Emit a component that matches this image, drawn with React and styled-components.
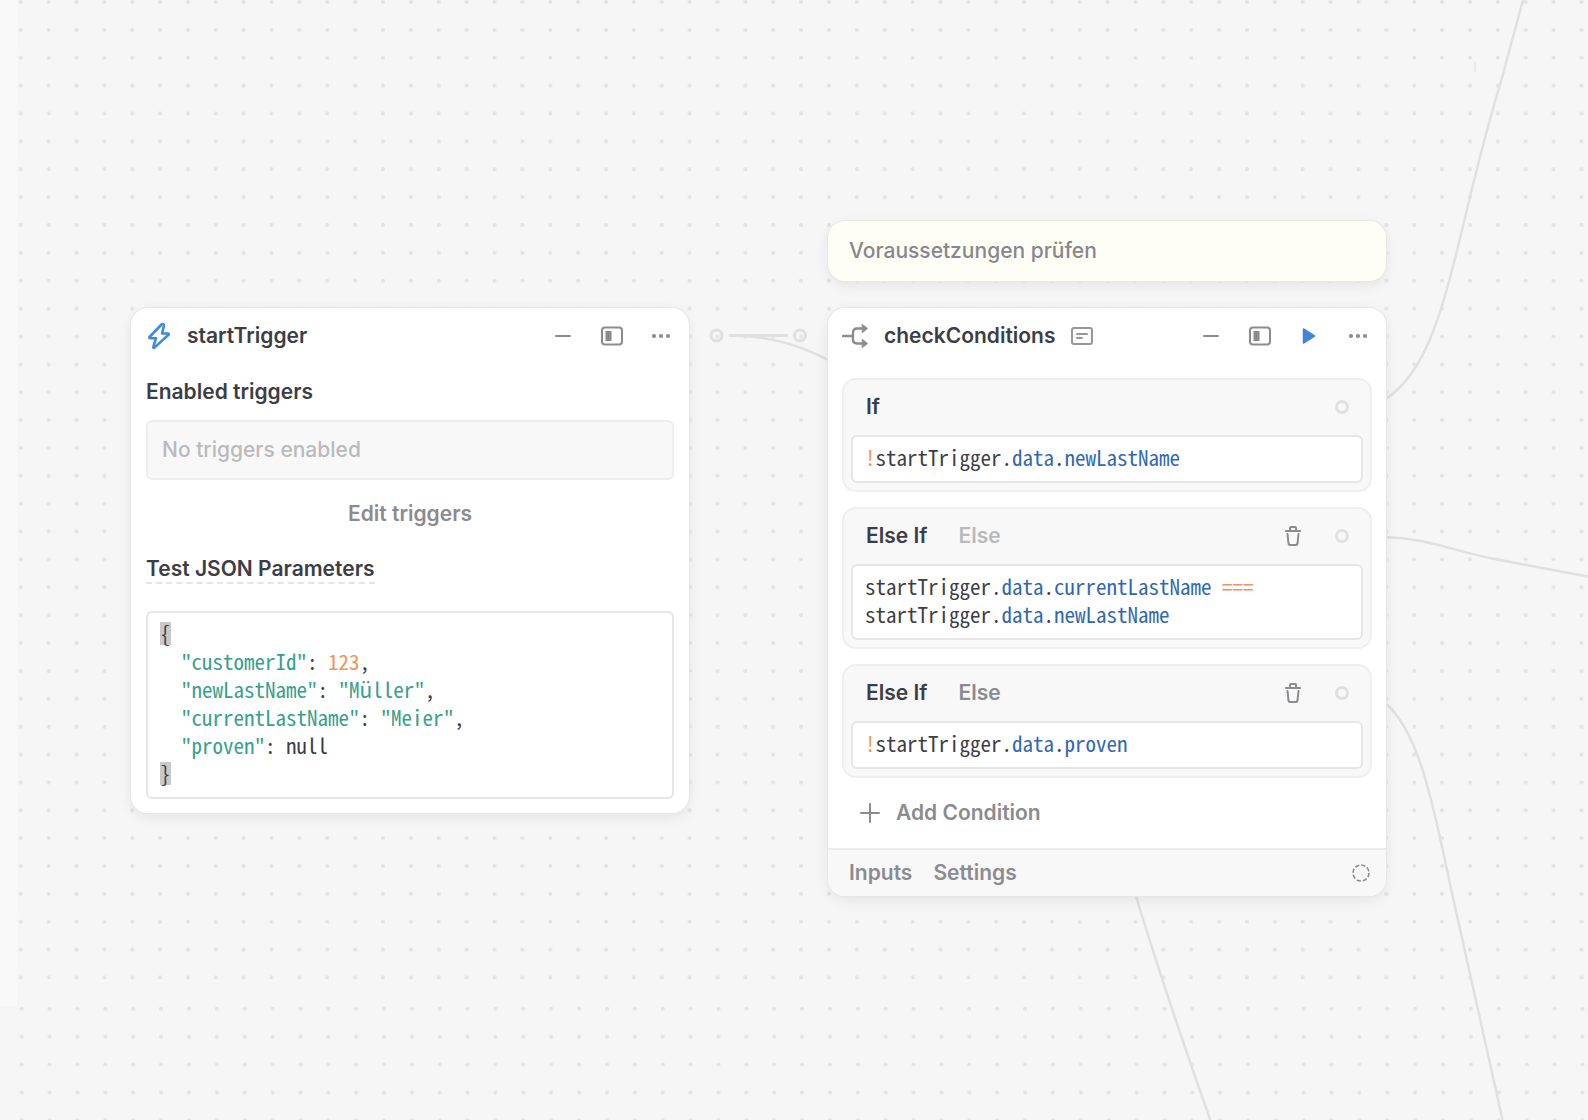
import styled, { createGlobalStyle, css } from "styled-components";

const GlobalStyle = createGlobalStyle`
    * {
        box-sizing: border-box;
    }

    body {
        margin: 0;
        background-color: #f6f6f6;
        color: #3d3d46;
        font-family: Inter, "Liberation Sans", sans-serif;
        font-size: 21px;
        line-height: 28px;
    }
`

const Canvas = styled.main`
    position: relative;
    min-height: 100vh;
    overflow: hidden;
`

const Wires = styled.svg`
    position: absolute;
    inset: 0;
    width: 100%;
    height: 100%;
`

const Node = styled.section`
    position: absolute;
    left: ${props => props.$x}px;
    top: ${props => props.$y}px;
    width: 558px;
`

const surface = css`
    border-radius: 17px;
    box-shadow: 0 0 0 1px #e7e7e7, 0 4px 14px rgba(0, 0, 0, 0.08);
`

const Card = styled.div`
    ${surface}
    background-color: #ffffff;
    overflow: hidden;
`

const Note = styled.p`
    ${surface}
    margin: 0 0 27px;
    padding: 16px 21px;
    background-color: #fffef6;
    color: #87878c;
    font-weight: 500;
`

const Header = styled.header`
    display: flex;
    align-items: center;
    height: 55px;
    padding: 0 14px;
`

const Name = styled.h2`
    margin: 0 15px 0 14px;
    font-size: 21px;
    font-weight: 600;
`

const Tools = styled.div`
    display: flex;
    gap: 21px;
    margin-left: auto;
`

const IconButton = styled.button`
    display: flex;
    padding: 0;
    border: 0;
    background: none;
    color: #8b8b90;
    cursor: pointer;
`

const Body = styled.div`
    display: flex;
    flex-direction: column;
    padding: 15px 15px 14px;
`

const Label = styled.h3`
    margin: 0;
    font-size: 21px;
    font-weight: 600;
`

const HintLabel = styled(Label)`
    align-self: flex-start;
    margin-bottom: 27px;
    border-bottom: 2px dashed #e4e4e4;
    line-height: 26px;
`

const Empty = styled.div`
    margin-top: 14px;
    padding: 14px;
    border: 2px solid #eeeeee;
    border-radius: 6px;
    background-color: #f8f8f8;
    color: #b9babc;
    font-weight: 500;
`

const TextButton = styled.button`
    display: flex;
    align-items: center;
    gap: 12px;
    padding: 0;
    border: 0;
    background: none;
    color: ${props => props.$color || '#8b8b90'};
    font: inherit;
    font-weight: 600;
    cursor: pointer;
`

const EditButton = styled(TextButton)`
    align-self: center;
    margin: 20px 0 28px;
`

const Code = styled.pre`
    margin: 0;
    padding: 6px 12px 10px;
    border: 2px solid #e6e6e6;
    border-radius: 6px;
    background-color: #ffffff;
    color: #3d3d46;
    font-family: "Noto Sans Mono CJK SC", "Liberation Mono", monospace;
    font-size: 21px;
    line-height: 28px;
    white-space: pre-wrap;
`

const tokens = {
    string: '#35a08c',
    number: '#f2935a',
    operator: '#f2935a',
    property: '#3067b5',
}

const Token = styled.span`
    color: ${props => tokens[props.$type]};
`

const Brace = styled.span`
    display: inline-block;
    background-color: #c9c9c9;
    line-height: 23px;
`

const Conditions = styled.div`
    display: flex;
    flex-direction: column;
    gap: 15px;
    padding: 15px 14px 21px;
`

const Condition = styled.div`
    padding: 0 7px 7px;
    border: 2px solid #efefef;
    border-radius: 14px;
    background-color: #f8f8f8;
`

const ConditionHeader = styled.div`
    display: flex;
    align-items: center;
    height: 55px;
    padding: 0 14px 2px 15px;
    gap: 31px;
`

const ConditionTools = styled.div`
    display: flex;
    align-items: center;
    gap: 28px;
    margin-left: auto;
`

const Port = styled.span`
    width: 14px;
    height: 14px;
    border: 3px solid #e0e0e0;
    border-radius: 50%;
`

const AddButton = styled(TextButton)`
    margin: 6px 14px 0;
`

const Footer = styled.footer`
    display: flex;
    align-items: center;
    gap: 21px;
    height: 48px;
    padding: 0 15px 0 21px;
    border-top: 2px solid #ebebeb;
    background-color: #f8f8f8;
`

const Status = styled.span`
    display: flex;
    margin-left: auto;
    color: #8b8b90;
`

function Icon({ children, size = 28 }) {
    return (
        <svg width={size} height={size} viewBox={`0 0 ${size} ${size}`} fill="none" stroke="currentColor" strokeWidth="2" strokeLinecap="round" strokeLinejoin="round" aria-hidden="true">
            {children}
        </svg>
    )
}

function BoltIcon() {
    return (
        <Icon><path d="M16.5 2.5 4.5 15c-.5.6-.2 1.2.5 1.2h6L8.3 25c-.2.9.6 1.2 1.2.6L23.5 12.8c.6-.6.3-1.3-.5-1.3h-6l2-8c.2-1.2-1.5-2-2.5-1Z" stroke="#3f8ae0" strokeWidth="2.6" /></Icon>
    )
}

function BranchIcon() {
    return (
        <Icon>
            <path d="M1 14h10M21 6.5h-6q-4 0-4 4v7q0 4 4 4h6" strokeWidth="2.4" />
            <path d="m20.5 2.5 5 4-5 4zM20.5 17.5l5 4-5 4z" fill="currentColor" strokeWidth="1" />
        </Icon>
    )
}

function NoteIcon() {
    return (
        <Icon size={22}>
            <rect x="1" y="3" width="20" height="16" rx="2" stroke="#97979b" />
            <path d="M6 9h10M6 13h5" stroke="#97979b" />
        </Icon>
    )
}

function TrashIcon() {
    return (
        <Icon>
            <path d="M7 9h14" strokeWidth="2.2" />
            <path d="M11 8V6q0-1 1-1h4q1 0 1 1v2M8.500 12l1 9.500q.2 1.500 1.500 1.500h6q1.300 0 1.500-1.500l1-9.500" />
        </Icon>
    )
}

function NodeTools({ runnable }) {
    return (
        <Tools>
            <IconButton aria-label="Minimize"><Icon><path d="M7 14h14" /></Icon></IconButton>
            <IconButton aria-label="Toggle panel">
                <Icon>
                    <rect x="4" y="5.5" width="20" height="17" rx="3" />
                    <path d="M7.500 9h6v10h-6z" fill="currentColor" stroke="none" />
                </Icon>
            </IconButton>
            {runnable && (
                <IconButton aria-label="Run">
                    <Icon><path d="M8.500 7v14l11-7z" fill="#4285dc" stroke="#4285dc" strokeWidth="1.5" /></Icon>
                </IconButton>
            )}
            <IconButton aria-label="More">
                <Icon>
                    <g fill="currentColor" stroke="none">
                        <circle cx="7" cy="14" r="2.1" />
                        <circle cx="14" cy="14" r="2.1" />
                        <circle cx="21" cy="14" r="2.1" />
                    </g>
                </Icon>
            </IconButton>
        </Tools>
    )
}

function ConditionBlock({ first, elseColor, children }) {
    return (
        <Condition>
            <ConditionHeader>
                {first ? <Label>If</Label> : (
                    <>
                        <TextButton $color="#3d3d46">Else If</TextButton>
                        <TextButton $color={elseColor}>Else</TextButton>
                    </>
                )}
                <ConditionTools>
                    {!first && <IconButton aria-label="Delete condition"><TrashIcon /></IconButton>}
                    <Port />
                </ConditionTools>
            </ConditionHeader>
            <Code>{children}</Code>
        </Condition>
    )
}

function Path({ names }) {
    return (
        <>startTrigger{names.map(name => <span key={name}>.<Token $type="property">{name}</Token></span>)}</>
    )
}

function Background() {
    return (
        <Wires aria-hidden="true">
            <defs>
                <pattern id="dots" x="6.8" y="-11.9" width="27.87" height="27.87" patternUnits="userSpaceOnUse">
                    <circle cx="13.9" cy="13.9" r="2" fill="#e2e2e2" />
                </pattern>
                <pattern id="dotsLower" x="7.8" y="994.8" width="27.87" height="27.87" patternUnits="userSpaceOnUse">
                    <circle cx="13.9" cy="13.9" r="2" fill="#e2e2e2" />
                </pattern>
            </defs>
            <rect width="17" height="1006" fill="#f9f9f9" />
            <rect x="17" width="100%" height="992" fill="url(#dots)" />
            <rect x="17" y="996" width="100%" height="100%" fill="url(#dotsLower)" />
            <g fill="none" stroke="#e0e0e0" strokeWidth="3" strokeLinecap="round">
                <path d="M730 335.5h57" />
                <circle cx="716.5" cy="335.5" r="5.5" />
                <circle cx="800" cy="335.5" r="5.5" />
                <path d="M730 335.5C768 336 798 344 830 361" strokeWidth="2.5" />
                <path d="M1384 400C1447 362 1453 237 1500 85L1523 0" strokeWidth="2.5" />
                <path d="M1384 537C1430 538 1458 553 1500 560L1590 577" strokeWidth="2.5" />
                <path d="M1384 702C1425 735 1437 830 1458 920L1503 1122" strokeWidth="2.5" />
                <path d="M1134 890C1160 975 1184 1046 1211 1122" strokeWidth="2.5" />
                <path d="M1475 62v9" strokeWidth="1" />
            </g>
        </Wires>
    )
}

function App() {
    return (
        <Canvas>
            <GlobalStyle />
            <Background />

            <Node $x={131} $y={308}>
                <Card>
                    <Header>
                        <BoltIcon />
                        <Name>startTrigger</Name>
                        <NodeTools />
                    </Header>
                    <Body>
                        <Label>Enabled triggers</Label>
                        <Empty>No triggers enabled</Empty>
                        <EditButton>Edit triggers</EditButton>
                        <HintLabel>Test JSON Parameters</HintLabel>
                        <Code>
                            <Brace>{'{'}</Brace>{'\n  '}
                            <Token $type="string">"customerId"</Token>: <Token $type="number">123</Token>,{'\n  '}
                            <Token $type="string">"newLastName"</Token>: <Token $type="string">"Müller"</Token>,{'\n  '}
                            <Token $type="string">"currentLastName"</Token>: <Token $type="string">"Meier"</Token>,{'\n  '}
                            <Token $type="string">"proven"</Token>: null{'\n'}
                            <Brace>{'}'}</Brace>
                        </Code>
                    </Body>
                </Card>
            </Node>

            <Node $x={828} $y={221}>
                <Note>Voraussetzungen prüfen</Note>
                <Card>
                    <Header>
                        <IconButton as="span"><BranchIcon /></IconButton>
                        <Name>checkConditions</Name>
                        <IconButton aria-label="Comment"><NoteIcon /></IconButton>
                        <NodeTools runnable />
                    </Header>
                    <Conditions>
                        <ConditionBlock first>
                            <Token $type="operator">!</Token><Path names={['data', 'newLastName']} />
                        </ConditionBlock>
                        <ConditionBlock elseColor="#b9babc">
                            <Path names={['data', 'currentLastName']} /> <Token $type="operator">===</Token>{'\n'}
                            <Path names={['data', 'newLastName']} />
                        </ConditionBlock>
                        <ConditionBlock>
                            <Token $type="operator">!</Token><Path names={['data', 'proven']} />
                        </ConditionBlock>
                        <AddButton>
                            <Icon><path d="M5 14h18M14 5v18" /></Icon>
                            Add Condition
                        </AddButton>
                    </Conditions>
                    <Footer>
                        <TextButton>Inputs</TextButton>
                        <TextButton>Settings</TextButton>
                        <Status>
                            <Icon size={20}><circle cx="10" cy="10" r="8" strokeDasharray="4.3 1.983" strokeWidth="1.6" strokeLinecap="butt" /></Icon>
                        </Status>
                    </Footer>
                </Card>
            </Node>
        </Canvas>
    )
}

export default App
